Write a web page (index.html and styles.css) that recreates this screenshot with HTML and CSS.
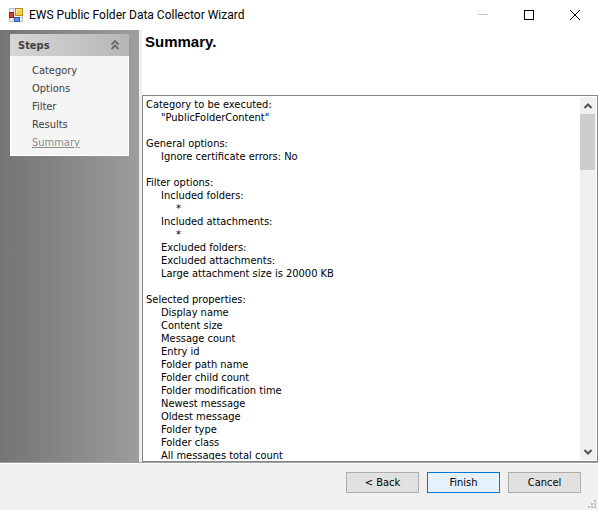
FILE: index.html
```
<!DOCTYPE html>
<html lang="en">
<head>
  <meta charset="UTF-8">
  <meta name="viewport" content="width=device-width, initial-scale=1.0">
  <title>EWS Public Folder Data Collector Wizard</title>
  <link rel="stylesheet" href="styles.css">
</head>
<body>

  <header class="title-bar">
    <svg class="app-icon" width="14" height="14" viewBox="0 0 14 14" aria-hidden="true">
      <rect x="0.5" y="0.5" width="13" height="13" fill="#f2f2f2" stroke="#b9bcc0"/>
      <path d="M4.500 1v12M1 9.500h12" stroke="#c9ccd0"/>
      <rect x="0.500" y="4.500" width="4" height="5" fill="#d8432c" stroke="#8e1a10"/>
      <rect x="6.500" y="0.500" width="7" height="7" fill="#f6cf4a" stroke="#c08a14"/>
      <path d="M7.500 5V1.500H12" stroke="#fdeea8" fill="none"/>
      <rect x="5.500" y="9.500" width="5" height="4" fill="#5b92e0" stroke="#2d5eb4"/>
    </svg>
    <span class="window-title">EWS Public Folder Data Collector Wizard</span>
    <div class="window-controls">
      <button class="window-btn" aria-label="Minimize">
        <svg width="10" height="10" viewBox="0 0 10 10"><path d="M0 4.500h10" stroke="#c4c4c4"/></svg>
      </button>
      <button class="window-btn" aria-label="Maximize">
        <svg width="10" height="10" viewBox="0 0 10 10"><rect x="0.500" y="0.500" width="9" height="9" fill="none" stroke="#000"/></svg>
      </button>
      <button class="window-btn" aria-label="Close">
        <svg width="10" height="10" viewBox="0 0 10 10"><path d="M0 0l10 10M10 0L0 10" stroke="#000"/></svg>
      </button>
    </div>
  </header>

  <div class="wizard">
    <aside class="sidebar">
      <nav class="steps">
        <div class="steps-header">
          <h2>Steps</h2>
          <button class="collapse-btn" aria-label="Collapse">
            <svg width="8" height="10" viewBox="0 0 8 10"><path d="M0.500 4.500L4 1l3.500 3.500M0.500 9L4 5.500 7.500 9" fill="none" stroke="#686868" stroke-width="1.800"/></svg>
          </button>
        </div>
        <ul class="steps-list">
          <li><a href="#">Category</a></li>
          <li><a href="#">Options</a></li>
          <li><a href="#">Filter</a></li>
          <li><a href="#">Results</a></li>
          <li><a href="#" class="current">Summary</a></li>
        </ul>
      </nav>
    </aside>

    <main class="content">
      <h1><label for="summary">Summary.</label></h1>
      <div class="summary-box">
        <textarea id="summary" class="summary-text" readonly>Category to be executed:
	"PublicFolderContent"

General options:
	Ignore certificate errors: No

Filter options:
	Included folders:
		*
	Included attachments:
		*
	Excluded folders:
	Excluded attachments:
	Large attachment size is 20000 KB

Selected properties:
	Display name
	Content size
	Message count
	Entry id
	Folder path name
	Folder child count
	Folder modification time
	Newest message
	Oldest message
	Folder type
	Folder class
	All messages total count</textarea>
        <div class="scrollbar">
          <button class="scroll-btn" aria-label="Scroll up">
            <svg width="8" height="6" viewBox="0 0 8 6"><path d="M0.500 5L4 1.500 7.500 5" fill="none" stroke="#555" stroke-width="2"/></svg>
          </button>
          <div class="scroll-track"><div class="scroll-thumb"></div></div>
          <button class="scroll-btn" aria-label="Scroll down">
            <svg width="8" height="6" viewBox="0 0 8 6"><path d="M0.500 1L4 4.500 7.500 1" fill="none" stroke="#555" stroke-width="2"/></svg>
          </button>
        </div>
      </div>
    </main>
  </div>

  <footer class="footer">
    <button class="btn">&lt; Back</button>
    <button class="btn btn-default">Finish</button>
    <button class="btn">Cancel</button>
    <svg class="size-grip" width="8" height="8" viewBox="0 0 8 8" aria-hidden="true">
      <path d="M6 0h2v2h-2zM3 3h2v2h-2zM6 3h2v2h-2zM0 6h2v2h-2zM3 6h2v2h-2zM6 6h2v2h-2z" fill="#bfbfbf"/>
    </svg>
  </footer>

</body>
</html>
```
FILE: styles.css
```
* {
  box-sizing: border-box;
}

body {
  margin: 0;
  height: 100vh;
  display: flex;
  flex-direction: column;
  background-color: #fff;
  color: #000;
  font-family: Tahoma, 'DejaVu Sans Condensed', 'DejaVu Sans', sans-serif;
  font-size: 11px;
  line-height: 13px;
}

button {
  font: inherit;
  color: inherit;
  padding: 0;
  border: none;
  background: none;
}

svg {
  display: block;
}

/* title bar */
.title-bar {
  display: flex;
  align-items: center;
  height: 30px;
  padding-left: 9px;
}

.window-title {
  flex: 1;
  margin-left: 6px;
  font-family: 'Segoe UI', Roboto, sans-serif;
  font-size: 12px;
  line-height: 16px;
}

.window-controls {
  display: flex;
  align-self: stretch;
}

.window-btn {
  display: flex;
  align-items: center;
  justify-content: center;
  width: 46px;
}

/* steps panel */
.wizard {
  flex: 1;
  display: flex;
  min-height: 0;
  border-bottom: 1px solid #a0a0a0;
}

.sidebar {
  width: 142px;
  padding: 4px 10px;
  border-right: 3px solid #f0f0f0;
  background: linear-gradient(to right, #747474, #9d9d9d);
}

.steps {
  border: 1px solid #fff;
  border-top: none;
  border-radius: 2px 2px 0 0;
  background-color: #f5f5f5;
}

.steps-header {
  display: flex;
  align-items: center;
  justify-content: space-between;
  height: 22px;
  margin: 0 -1px;
  padding: 0 10px 0 8px;
  border-radius: 2px 2px 0 0;
  background: linear-gradient(to right, #d6d6d6, #b6b6b6);
}

.steps-header h2 {
  margin: 0;
  font-size: 11px;
  color: #404040;
}

.steps-list {
  margin: 0;
  padding: 6px 0 3px 21px;
  list-style: none;
}

.steps-list li {
  line-height: 18px;
}

.steps-list a {
  color: #404040;
  text-decoration: none;
}

.steps-list .current {
  color: #8a8a8a;
  text-decoration: underline;
}

/* summary page */
.content {
  flex: 1;
  display: flex;
  flex-direction: column;
  min-width: 0;
}

.content h1 {
  margin: 0;
  height: 65px;
  padding: 4px 3px;
  font-family: 'Liberation Sans', Arial, sans-serif;
  font-size: 15px;
  line-height: 16px;
}

.summary-box {
  flex: 1;
  display: flex;
  min-height: 0;
  padding: 1px;
  border: 1px solid #828790;
}

.summary-text {
  flex: 1;
  min-width: 0;
  padding: 1px 2px 0;
  border: none;
  outline: none;
  resize: none;
  overflow: hidden;
  white-space: pre;
  tab-size: 15px;
  font: inherit;
  color: inherit;
}

.scrollbar {
  display: flex;
  flex-direction: column;
  width: 16px;
  background-color: #f0f0f0;
}

.scroll-btn {
  display: flex;
  align-items: center;
  justify-content: center;
  height: 17px;
}

.scroll-track {
  flex: 1;
}

.scroll-thumb {
  width: 15px;
  height: 56px;
  background-color: #cdcdcd;
}

/* footer */
.footer {
  position: relative;
  display: flex;
  justify-content: flex-end;
  gap: 8px;
  height: 47px;
  padding: 8px 17px 0 0;
  border-top: 1px solid #fff;
  background-color: #f0f0f0;
}

.btn {
  width: 73px;
  height: 21px;
  border: 1px solid #adadad;
  background-color: #e1e1e1;
}

.btn-default {
  border-color: #0078d7;
  background-color: #e5f1fb;
}

.size-grip {
  position: absolute;
  right: 2px;
  bottom: 2px;
}
```
